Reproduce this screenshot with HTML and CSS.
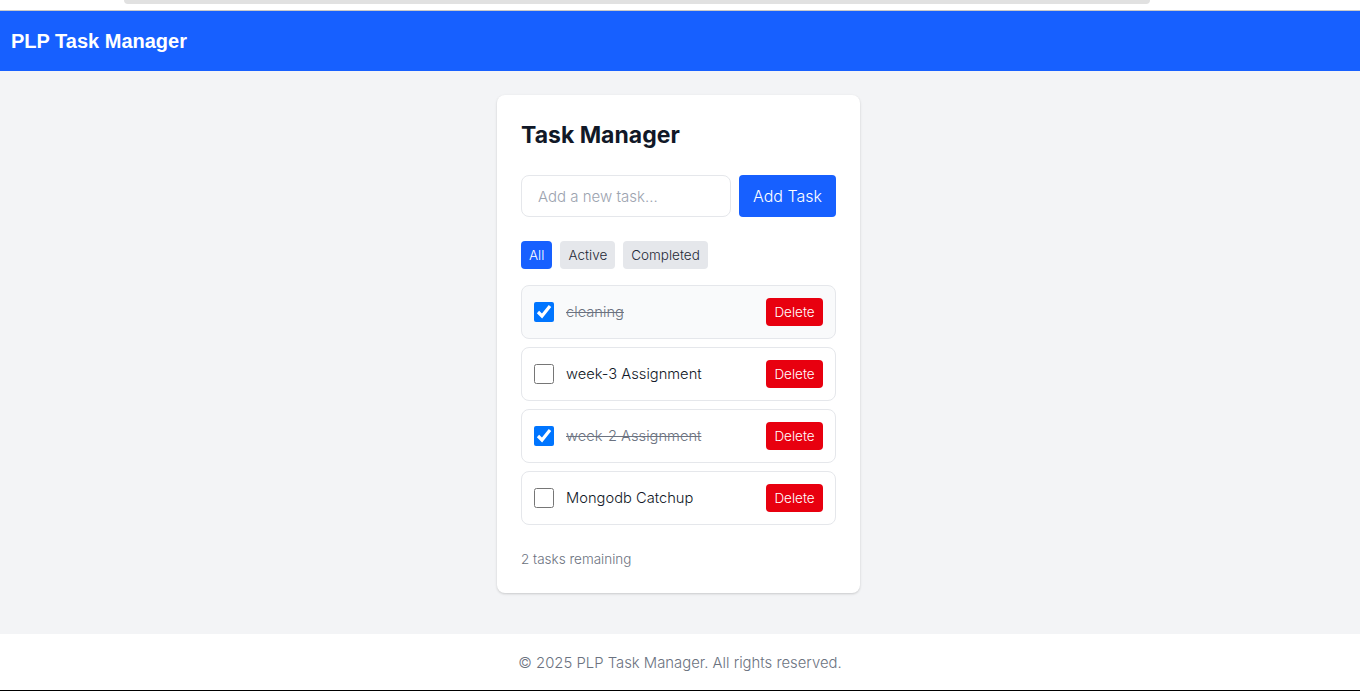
FILE: index.html
```html
<!DOCTYPE html>
<html lang="en">
<head>
<meta charset="utf-8">
<title>PLP Task Manager</title>
<link rel="stylesheet" href="styles.css">
</head>
<body>
<div class="topstrip"><div class="topbar"></div></div>
<header class="header"><h1 class="brand">PLP Task Manager</h1></header>
<main class="main">
  <section class="card">
    <h2 class="title">Task Manager</h2>
    <form class="add-row">
      <input class="task-input" type="text" placeholder="Add a new task...">
      <button class="add-btn" type="button">Add Task</button>
    </form>
    <div class="filters">
      <button class="filter active" type="button">All</button>
      <button class="filter" type="button">Active</button>
      <button class="filter" type="button">Completed</button>
    </div>
    <ul class="tasks">
      <li class="task hover"><input class="check" type="checkbox" checked><span class="label done">cleaning</span><button class="del" type="button">Delete</button></li>
      <li class="task"><input class="check" type="checkbox"><span class="label">week-3 Assignment</span><button class="del" type="button">Delete</button></li>
      <li class="task"><input class="check" type="checkbox" checked><span class="label done">week-2 Assignment</span><button class="del" type="button">Delete</button></li>
      <li class="task"><input class="check" type="checkbox"><span class="label">Mongodb Catchup</span><button class="del" type="button">Delete</button></li>
    </ul>
    <p class="remaining">2 tasks remaining</p>
  </section>
</main>
<footer class="footer">© 2025 PLP Task Manager. All rights reserved.</footer>
</body>
</html>
```
FILE: styles.css
```css
* { box-sizing: border-box; }
html, body { margin: 0; padding: 0; }
body {
  font-family: Inter, "Liberation Sans", Arial, sans-serif;
  background: #f3f4f6;
  height: 691px;
  display: flex;
  flex-direction: column;
  overflow: hidden;
}
.topstrip {
  height: 11px;
  background: #fff;
  border-bottom: 1px solid #c9c9c9;
  display: flex;
  justify-content: center;
}
.topbar {
  width: 1026px;
  height: 4px;
  margin-left: -86px;
  background: #e1e1e1;
  border-radius: 0 0 10px 10px;
}
.header {
  height: 60px;
  background: #1760ff;
  display: flex;
  align-items: center;
  padding: 0 11px;
}
.brand {
  margin: 0;
  color: #fff;
  font-family: "Liberation Sans", Arial, sans-serif;
  font-size: 20px;
  font-weight: bold;
}
.main {
  flex: 1;
  display: flex;
  justify-content: center;
  align-items: flex-start;
  padding-top: 24px;
}
.card {
  width: 363px;
  margin-left: -3px;
  background: #fff;
  border-radius: 8px;
  box-shadow: 0 1px 3px rgba(0,0,0,0.12), 0 1px 2px rgba(0,0,0,0.06);
  padding: 24px;
}
.title {
  margin: 0 0 24px;
  font-size: 23px;
  line-height: 32px;
  font-weight: 700;
  color: #111827;
}
.add-row {
  display: flex;
  gap: 8px;
  margin: 0 0 24px;
}
.task-input {
  width: 210px;
  height: 42px;
  border: 1px solid #e5e7eb;
  border-radius: 8px;
  padding: 0 16px;
  font-family: Inter, sans-serif;
  font-weight: 300;
  font-size: 15px;
  color: #111827;
  outline: none;
}
.task-input::placeholder { color: #9ca3af; }
.add-btn {
  width: 97px;
  height: 42px;
  border: none;
  border-radius: 4px;
  background: #1760ff;
  color: #fff;
  font-family: Inter, sans-serif;
  font-weight: 300;
  font-size: 16px;
  padding: 0;
}
.filters {
  display: flex;
  gap: 8px;
  margin-bottom: 16px;
}
.filter {
  height: 28px;
  padding: 0 8px;
  border: none;
  border-radius: 4px;
  background: #e5e7eb;
  color: #1f2937;
  font-family: Inter, sans-serif;
  font-weight: 300;
  font-size: 13.5px;
}
.filter.active { background: #1760ff; color: #fff; }
.tasks {
  list-style: none;
  margin: 0;
  padding: 0;
  display: flex;
  flex-direction: column;
  gap: 8px;
}
.task {
  height: 54px;
  border: 1px solid #e5e7eb;
  border-radius: 8px;
  padding: 0 12px;
  display: flex;
  align-items: center;
  background: #fff;
}
.task.hover { background: #f9fafb; }
.check {
  width: 20px;
  height: 20px;
  margin: 0;
  accent-color: #0075ff;
}
.label {
  flex: 1;
  margin-left: 12px;
  font-size: 14.7px;
  font-weight: 300;
  color: #111827;
}
.label.done {
  text-decoration: line-through;
  color: #6b7280;
}
.del {
  width: 57px;
  height: 28px;
  border: none;
  border-radius: 4px;
  background: #e8000f;
  color: #fff;
  font-family: Inter, sans-serif;
  font-weight: 300;
  font-size: 13.5px;
  padding: 0;
}
.remaining {
  margin: 24px 0 0;
  font-size: 13.5px;
  line-height: 20px;
  font-weight: 300;
  color: #6b7280;
}
.footer {
  height: 57px;
  background: #fff;
  border-bottom: 1px solid #000;
  display: flex;
  align-items: center;
  justify-content: center;
  font-family: Inter, sans-serif;
  font-weight: 300;
  font-size: 14.85px;
  color: #6b7280;
  padding-top: 1px;
}
```
